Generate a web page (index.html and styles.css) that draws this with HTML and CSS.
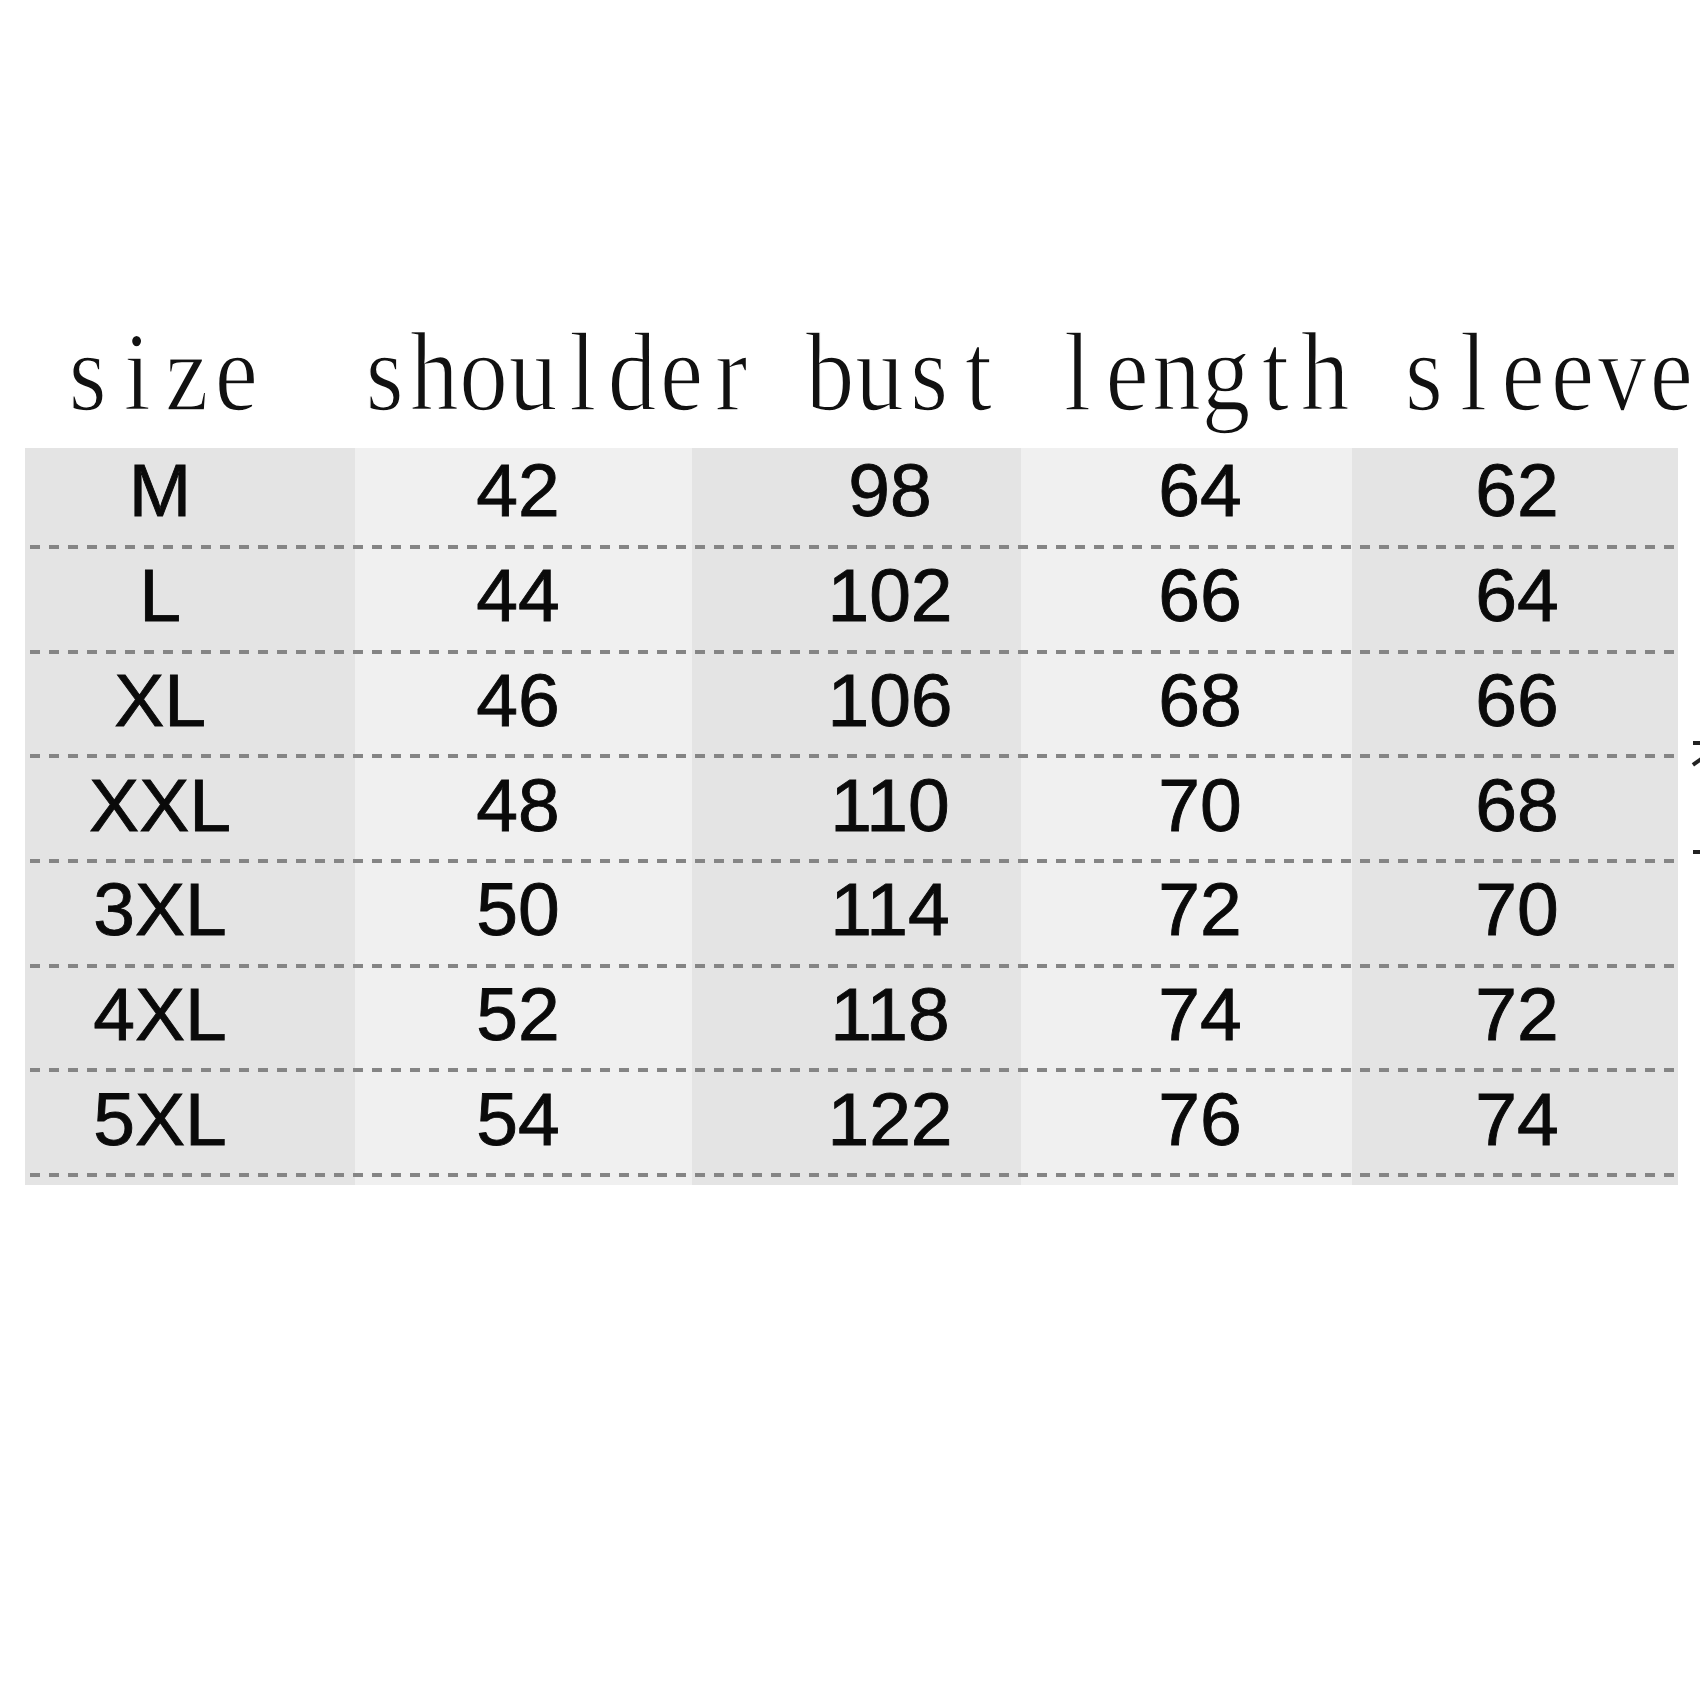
FILE: index.html
```html
<!DOCTYPE html>
<html lang="en">
<head>
<meta charset="utf-8">
<title>Size chart</title>
<link rel="stylesheet" href="styles.css">
</head>
<body>
<div class="page">
  <div class="head"><span class="ch">s</span><span class="ch">i</span><span class="ch">z</span><span class="ch">e</span><span class="ch"> </span><span class="ch"> </span><span class="ch">s</span><span class="ch">h</span><span class="ch">o</span><span class="ch">u</span><span class="ch">l</span><span class="ch">d</span><span class="ch">e</span><span class="ch">r</span><span class="ch"> </span><span class="ch">b</span><span class="ch">u</span><span class="ch">s</span><span class="ch">t</span><span class="ch"> </span><span class="ch">l</span><span class="ch">e</span><span class="ch">n</span><span class="ch">g</span><span class="ch">t</span><span class="ch">h</span><span class="ch"> </span><span class="ch">s</span><span class="ch">l</span><span class="ch">e</span><span class="ch">e</span><span class="ch">v</span><span class="ch">e</span></div>
  <div class="table">
    <div class="row first">
      <div class="cell c1">M</div><div class="cell c2">42</div><div class="cell c3">98</div><div class="cell c4">64</div><div class="cell c5">62</div>
    </div>
    <div class="sep"></div>
    <div class="row">
      <div class="cell c1">L</div><div class="cell c2">44</div><div class="cell c3">102</div><div class="cell c4">66</div><div class="cell c5">64</div>
    </div>
    <div class="sep"></div>
    <div class="row">
      <div class="cell c1">XL</div><div class="cell c2">46</div><div class="cell c3">106</div><div class="cell c4">68</div><div class="cell c5">66</div>
    </div>
    <div class="sep"></div>
    <div class="row">
      <div class="cell c1">XXL</div><div class="cell c2">48</div><div class="cell c3">110</div><div class="cell c4">70</div><div class="cell c5">68</div>
    </div>
    <div class="sep"></div>
    <div class="row">
      <div class="cell c1">3XL</div><div class="cell c2">50</div><div class="cell c3">114</div><div class="cell c4">72</div><div class="cell c5">70</div>
    </div>
    <div class="sep"></div>
    <div class="row">
      <div class="cell c1">4XL</div><div class="cell c2">52</div><div class="cell c3">118</div><div class="cell c4">74</div><div class="cell c5">72</div>
    </div>
    <div class="sep"></div>
    <div class="row">
      <div class="cell c1">5XL</div><div class="cell c2">54</div><div class="cell c3">122</div><div class="cell c4">76</div><div class="cell c5">74</div>
    </div>
    <div class="sep"></div>
  </div>
  <div class="edge-marks">
    <span class="mk mk-a"></span>
    <span class="mk mk-b"></span>
    <span class="mk mk-c"></span>
  </div>
</div>
</body>
</html>
```

FILE: styles.css
```css
html, body {
  margin: 0;
  padding: 0;
  background: #ffffff;
  width: 1700px;
  height: 1700px;
  overflow: hidden;
}

.page {
  position: relative;
  width: 1700px;
  height: 1700px;
  padding-top: 309px;
  box-sizing: border-box;
  overflow: hidden;
}

.head {
  height: 125px;
  margin-left: 63px;
  width: 1903px;
  overflow: hidden;
  font-family: "Liberation Serif", "Times New Roman", serif;
  font-size: 113px;
  line-height: 125px;
  white-space: nowrap;
  color: #111111;
  -webkit-text-stroke: 1.6px #ffffff;
  transform: scaleX(0.86);
  transform-origin: 0 0;
}

.ch {
  display: inline-block;
  width: 57.56px;
  text-align: center;
  white-space: pre;
}

.table {
  margin-top: 14px;
  margin-left: 25px;
  width: 1653px;
  padding-bottom: 8px;
  background: linear-gradient(to right,
    #e4e4e4 0, #e4e4e4 330px,
    #f0f0f0 330px, #f0f0f0 667px,
    #e4e4e4 667px, #e4e4e4 996px,
    #f0f0f0 996px, #f0f0f0 1327px,
    #e4e4e4 1327px, #e4e4e4 1653px);
}

.row {
  display: grid;
  grid-template-columns: 330px 337px 329px 331px 326px;
  height: 100.7px;
}

.row.first {
  height: 97px;
}

.cell {
  display: flex;
  align-items: center;
  justify-content: center;
  box-sizing: border-box;
  padding-bottom: 7px;
  font-family: "Liberation Sans", Arial, sans-serif;
  font-size: 75px;
  line-height: 75px;
  color: #0a0a0a;
  -webkit-text-stroke: 0.9px #0a0a0a;
}

.row.first .cell {
  padding-bottom: 12px;
}

.c1 { padding-right: 60px; }
.c2 { padding-right: 11px; }
.c3 { padding-left: 67px; }
.c4 { padding-left: 27px; }
.c5 { padding-left: 4px; }

.sep {
  height: 4px;
  margin: 0 2px 0 5px;
  background: repeating-linear-gradient(to right,
    #858585 0, #858585 10px,
    transparent 10px, transparent 19px);
}

.edge-marks {
  position: absolute;
  left: 1692px;
  top: 738px;
  width: 8px;
  height: 130px;
}

.mk {
  position: absolute;
  display: block;
  background: #222222;
}

.mk-a {
  left: 1px;
  top: 3px;
  width: 8px;
  height: 4px;
}

.mk-b {
  left: 0;
  top: 22px;
  width: 10px;
  height: 4px;
  transform: rotate(-35deg);
}

.mk-c {
  left: 1px;
  top: 112px;
  width: 8px;
  height: 4px;
}
```
